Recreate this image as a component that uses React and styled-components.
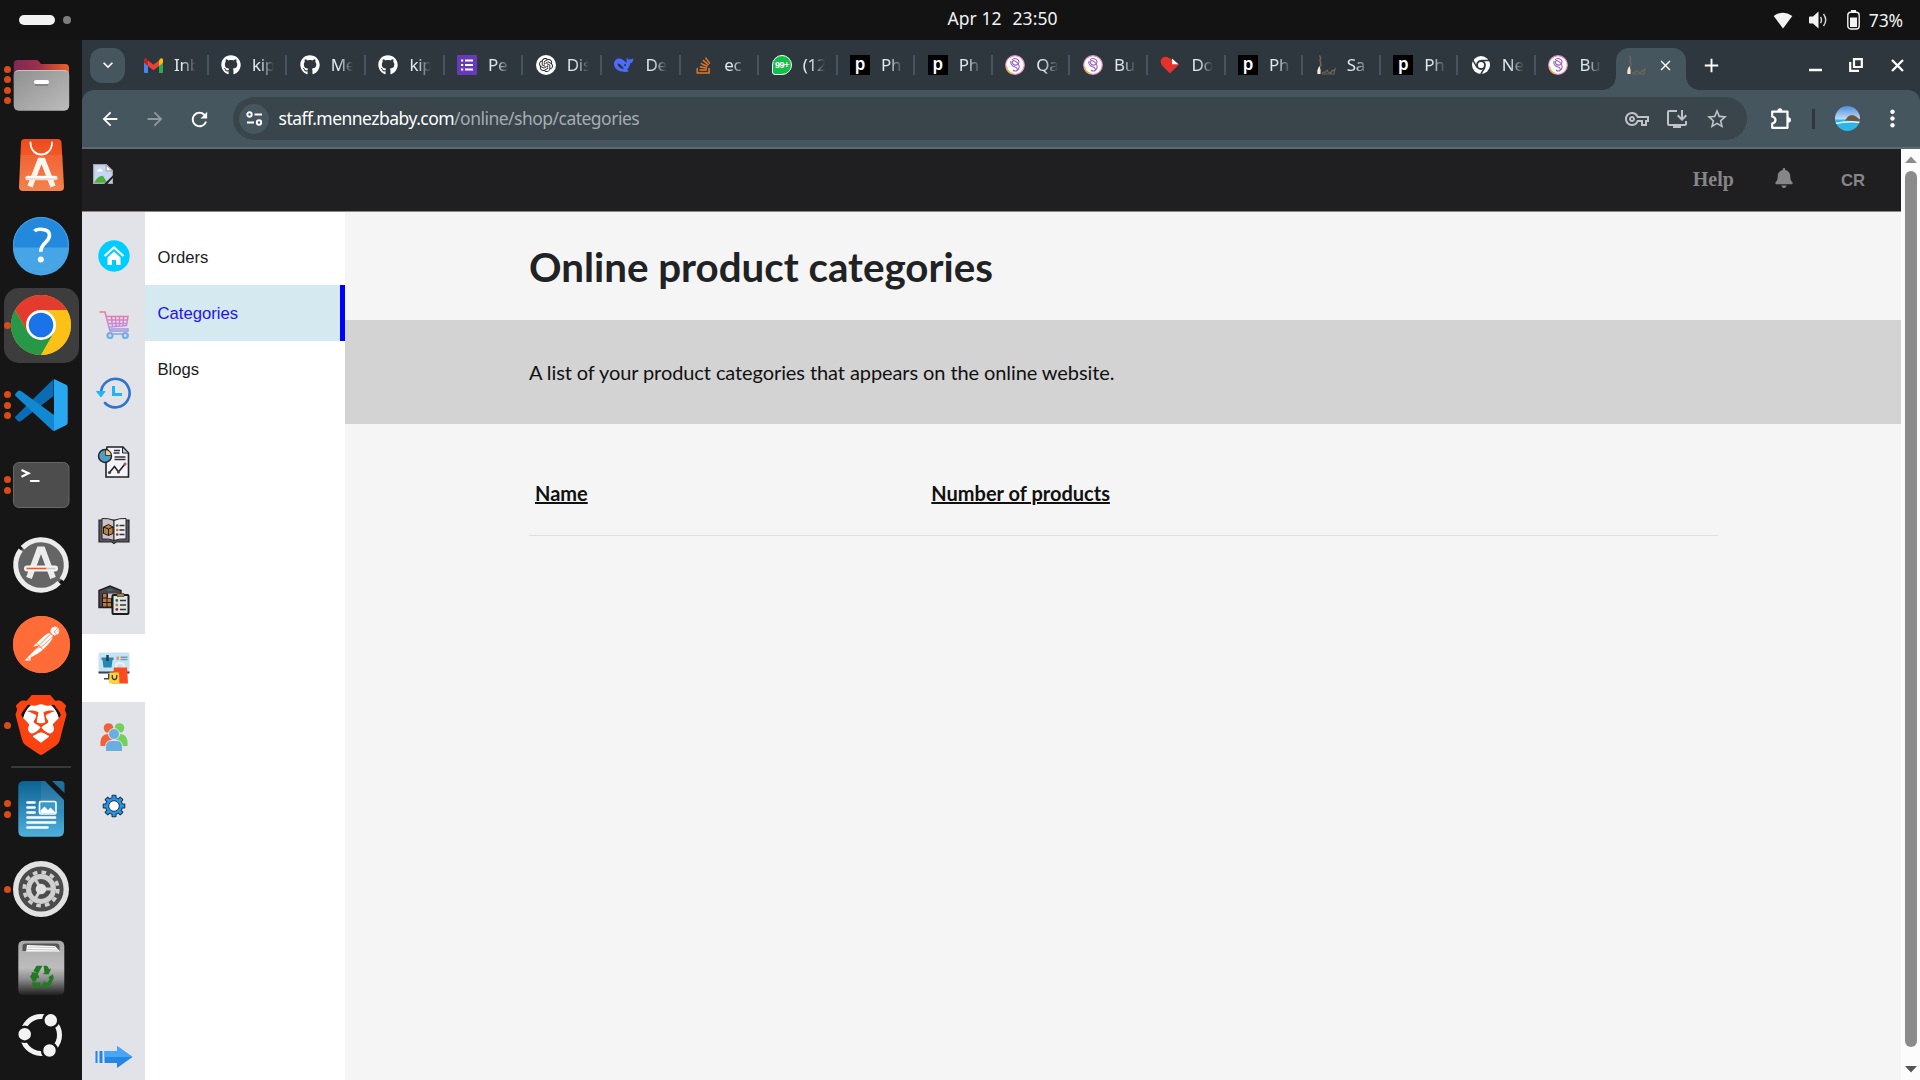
import React from "react";
import styled, { createGlobalStyle, css } from "styled-components";
import { FaGithub, FaStackOverflow, FaBell } from "react-icons/fa";
import { SiBrave, SiPostman, SiOpenai } from "react-icons/si";
import {
  MdArrowBack,
  MdArrowForward,
  MdRefresh,
  MdOutlineVpnKey,
  MdOutlineInstallDesktop,
  MdStarBorder,
  MdMoreVert,
  MdAdd,
  MdClose,
  MdKeyboardArrowDown,
} from "react-icons/md";

const uiFont = `"Noto Sans", "Open Sans", sans-serif`;

const GlobalStyle = createGlobalStyle`
  * { box-sizing: border-box; }
  html, body { margin: 0; padding: 0; background: #131313; overflow: hidden; }
  svg { display: block; flex: none; }
`;

const Desktop = styled.div`
  width: 1920px;
  height: 1080px;
  display: flex;
  flex-direction: column;
  overflow: hidden;
  background: #161616;
`;

/* ---------- system bar ---------- */
const SystemBar = styled.header`
  height: 40px;
  flex: none;
  display: grid;
  grid-template-columns: 1fr auto 1fr;
  align-items: center;
  padding: 0 17px 0 101px;
  background: #131313;
  color: #f2f2f2;
  font-family: ${uiFont};
  font-size: 17.5px;
`;
const Workspaces = styled.div`
  display: flex;
  align-items: center;
  gap: 7.5px;
  margin-left: -82px;
`;
const WorkspacePill = styled.span`
  width: ${(p) => (p.$active ? 36 : 8)}px;
  height: ${(p) => (p.$active ? 10 : 8)}px;
  border-radius: 5px;
  background: ${(p) => (p.$active ? "#f2f2f2" : "#7d7d7d")};
`;
const Clock = styled.div`
  display: flex;
  gap: 11px;
  line-height: 37px;
  height: 40px;
  margin-right: 81px;
  transform: translateX(41px);
  letter-spacing: 0.05px;
`;
const StatusTray = styled.div`
  display: flex;
  align-items: center;
  justify-content: flex-end;
`;
const BatteryText = styled.span`
  margin-left: 9px;
  font-size: 17.5px;
  letter-spacing: -0.1px;
`;
const TrayIcon = styled.svg`
  margin-left: ${(p) => p.$gap || 0}px;
`;

/* ---------- dock ---------- */
const Workspace = styled.div`
  flex: 1;
  display: flex;
  min-height: 0;
`;
const Dock = styled.nav`
  width: 82px;
  flex: none;
  padding-top: 5px;
  display: flex;
  flex-direction: column;
  background: #161616;
`;
const DockItem = styled.div`
  position: relative;
  height: ${(p) => p.$height || 80}px;
  display: grid;
  place-items: center;
  flex: none;
`;
const DockTile = styled.div`
  width: 75px;
  height: ${(p) => (p.$height ? p.$height : 75)}px;
  border-radius: 15px;
  display: flex;
  align-items: center;
  justify-content: center;
  background: ${(p) => (p.$active ? "#3d3d3d" : "transparent")};
`;
const Dots = styled.div`
  position: absolute;
  left: 3.5px;
  top: 0;
  bottom: 0;
  display: flex;
  flex-direction: column;
  justify-content: center;
  gap: 3.4px;
`;
const Dot = styled.i`
  width: 7px;
  height: 7px;
  border-radius: 50%;
  background: #dc4a16;
`;
const DockDivider = styled.hr`
  width: 60px;
  height: 2px;
  margin: 1px auto;
  border: 0;
  background: #3a3a3a;
`;

/* ---------- browser window ---------- */
const Browser = styled.section`
  flex: 1;
  min-width: 0;
  display: flex;
  flex-direction: column;
  background: #2d373d;
  font-family: ${uiFont};
`;
const TabStrip = styled.div`
  height: 50px;
  flex: none;
  display: flex;
  align-items: center;
  padding-left: 8px;
`;
const TabSearch = styled.div`
  width: 35px;
  height: 35px;
  border-radius: 12px;
  background: #45565f;
  color: #fff;
  display: grid;
  place-items: center;
  margin-right: 5.5px;
`;
const Tab = styled.div`
  width: ${(p) => p.$width}px;
  height: 20px;
  padding-left: 12.5px;
  display: flex;
  align-items: center;
  flex: none;
  border-right: 2px solid ${(p) => (p.$last ? "transparent" : "#45565f")};
`;
const TabTitle = styled.span`
  width: 22px;
  margin-left: 11px;
  overflow: hidden;
  white-space: nowrap;
  font-size: 17px;
  line-height: 26px;
  letter-spacing: -0.3px;
  color: #e3e8ea;
  mask-image: linear-gradient(90deg, #000 35%, transparent 100%);
`;
const Favicon = styled.span`
  width: 20px;
  height: 20px;
  flex: none;
  display: grid;
  place-items: center;
  color: #fff;
`;
const LetterMark = styled(Favicon)`
  background: #000;
  font: 600 17px/17px ${uiFont};
  padding-bottom: 3px;
`;
const CountMark = styled(Favicon)`
  border-radius: 50% 50% 50% 3px;
  border: 1.5px solid #fff;
  background: #12c04a;
  font: 700 9px/16px "Liberation Sans", Arial, sans-serif;
  letter-spacing: -0.5px;
`;
const ActiveTab = styled.div`
  width: 70px;
  height: 42.5px;
  margin-left: 2.5px;
  align-self: flex-end;
  position: relative;
  display: flex;
  align-items: center;
  padding: 0 10px 7px;
  gap: 11px;
  border-radius: 13px 13px 0 0;
  background: #45565f;
  color: #fff;
  flex: none;
  &::before,
  &::after {
    content: "";
    position: absolute;
    bottom: 0;
    width: 13px;
    height: 13px;
  }
  &::before {
    left: -13px;
    background: radial-gradient(circle at 0 0, transparent 12.5px, #45565f 13px);
  }
  &::after {
    right: -13px;
    background: radial-gradient(circle at 100% 0, transparent 12.5px, #45565f 13px);
  }
`;
const NewTab = styled.div`
  margin-left: 13.5px;
  color: #fff;
`;
const WindowControls = styled.div`
  margin-left: auto;
  padding-right: 16px;
  display: flex;
  align-items: center;
`;
const Toolbar = styled.div`
  height: 59px;
  flex: none;
  display: flex;
  align-items: center;
  padding-left: 17px;
  border-radius: 12px 12px 0 0;
  background: #45565f;
  border-bottom: 2px solid #5c6b72;
  color: #fff;
`;
const ToolButton = styled.span`
  width: 22px;
  height: 22px;
  display: grid;
  place-items: center;
  margin-right: 22.7px;
  opacity: ${(p) => (p.$dim ? 0.4 : 1)};
`;
const Omnibox = styled.div`
  width: 1514px;
  height: 42.5px;
  margin-right: 22px;
  border-radius: 22px;
  background: #39444b;
  display: flex;
  align-items: center;
  padding: 0 18px 0 6px;
`;
const SiteInfo = styled.span`
  width: 30px;
  height: 30px;
  border-radius: 50%;
  background: #45565f;
  display: grid;
  place-items: center;
`;
const Url = styled.span`
  margin-left: 9.5px;
  margin-top: -1px;
  font-size: 17.5px;
  letter-spacing: -0.52px;
  color: #fff;
  white-space: nowrap;
`;
const UrlPath = styled.span`
  color: #a5adb1;
`;
const OmniActions = styled.div`
  margin-left: auto;
  display: flex;
  gap: 16px;
  color: #c0c3c5;
`;
const ToolDivider = styled.i`
  width: 3px;
  height: 20px;
  margin: 0 20px 0 19px;
  background: #2d373d;
`;
const MenuButton = styled.span`
  margin-left: 18.5px;
`;

/* ---------- page ---------- */
const Viewport = styled.div`
  flex: 1;
  min-height: 0;
  display: flex;
`;
const Page = styled.div`
  flex: 1;
  min-width: 0;
  display: flex;
  flex-direction: column;
  background: #f5f5f5;
`;
const PageHeader = styled.header`
  height: 62.5px;
  flex: none;
  display: flex;
  align-items: center;
  padding: 0 36px 0 11px;
  background: #1f1e20;
  border-bottom: 1px solid #8d878d;
  color: #868686;
`;
const BrokenLogo = styled.svg`
  margin: -12px auto 0 0;
`;
const HelpLink = styled.a`
  font: bold 20px/24px "Liberation Serif", "Times New Roman", serif;
  margin: -2px 40px 0 0;
`;
const BellSlot = styled.span`
  margin-bottom: 4px;
`;
const Initials = styled.span`
  margin-left: 47px;
  padding-top: 2px;
  font: bold 16.67px/20px "Liberation Sans", Arial, sans-serif;
`;
const PageBody = styled.div`
  flex: 1;
  min-height: 0;
  display: flex;
`;
const IconRail = styled.nav`
  width: 63px;
  flex: none;
  padding: 9.5px 0 0;
  display: flex;
  flex-direction: column;
  background: #e2e3e9;
`;
const RailItem = styled.div`
  height: 68.75px;
  flex: none;
  display: grid;
  place-items: center;
  padding: 1px 0 0 1px;
  background: ${(p) => (p.$active ? "#fff" : "transparent")};
  ${(p) =>
    p.$bottom &&
    css`
      height: 46px;
      margin-top: auto;
      padding: 0;
    `}
`;
const SubMenu = styled.nav`
  width: 200px;
  flex: none;
  padding-top: 17.5px;
  background: #fff;
`;
const SubMenuItem = styled.a`
  height: 56.1px;
  display: flex;
  align-items: center;
  padding: 1.5px 0 0 12.5px;
  font: 16.67px/20px "Liberation Sans", Arial, sans-serif;
  color: ${(p) => (p.$active ? "#2211f5" : "#1b1b1b")};
  background: ${(p) => (p.$active ? "#d5e9f0" : "transparent")};
  border-right: 5px solid ${(p) => (p.$active ? "#0000ff" : "transparent")};
`;
const Content = styled.main`
  flex: 1;
  min-width: 0;
  font-family: Lato, sans-serif;
  color: #111;
`;
const Inset = styled.div`
  padding: 0 183px 0 184px;
`;
const Heading = styled.h1`
  margin: 0;
  height: 108.5px;
  display: flex;
  align-items: center;
  padding-top: 1px;
  font-size: 40.3px;
  font-weight: 700;
  color: #212223;
`;
const Band = styled(Inset)`
  height: 103.5px;
  display: flex;
  align-items: center;
  background: #d3d3d3;
  font-size: 20px;
  letter-spacing: -0.09px;
`;
const TableHead = styled.div`
  margin-top: 29px;
  height: 83.5px;
  display: grid;
  grid-template-columns: repeat(3, 1fr);
  align-items: center;
  padding-bottom: 2px;
  border-bottom: 1px solid #dfdfdf;
`;
const Column = styled.span`
  padding: 0 6px;
  font-size: 20px;
  font-weight: 700;
  text-decoration: underline;
  text-decoration-thickness: 1.5px;
`;
const Scrollbar = styled.div`
  width: 19px;
  flex: none;
  display: flex;
  flex-direction: column;
  align-items: center;
  padding: 7px 0 7px 1px;
  background: #fcfcfc;
`;
const Thumb = styled.div`
  width: 12px;
  flex: 1;
  margin: 8px 0 19px;
  border-radius: 6px;
  background: #8b8b8b;
`;

/* ---------- dock drawings ---------- */
const Art = ({ children, size = 64 }) => (
  <svg width={size} height={size} viewBox="0 0 64 64">
    {children}
  </svg>
);

const FilesIcon = () => (
  <Art>
    <defs>
      <linearGradient id="fb" x1="0" x2="1"><stop offset="0" stopColor="#7c2a56" /><stop offset=".45" stopColor="#9c3047" /><stop offset="1" stopColor="#ef6228" /></linearGradient>
      <linearGradient id="ff" x1="0" y1="0" x2="1" y2="1"><stop offset="0" stopColor="#8f8f8f" /><stop offset="1" stopColor="#bcbcbc" /></linearGradient>
    </defs>
    <path d="M4.7 30V11q0-4 4-4H27q2 0 3.500 2l1.500 2H56q4 0 4 4v16z" fill="url(#fb)" />
    <rect x="4.700" y="17" width="55.500" height="40.700" rx="5" fill="url(#ff)" />
    <path d="M6 19.500q1-2 4-2h45q3 0 4 2" stroke="#c4c4c4" fill="none" />
    <rect x="25" y="27" width="15" height="4" rx="2" fill="#fff" />
    <path d="M26 32h13" stroke="#666" />
  </Art>
);
const AppCenterIcon = () => (
  <Art>
    <defs><linearGradient id="ac" x2="0" y2="1"><stop offset="0" stopColor="#ef4a1c" /><stop offset="1" stopColor="#f4793f" /></linearGradient></defs>
    <path d="M15.500 6h33q4 0 4 4L55 54q0 4-4 4H14q-4 0-4-4L12 10q0-4 3.500-4z" fill="url(#ac)" />
    <path d="M11 22h43L55 54q0 4-4 4H14q-4 0-4-4z" fill="#fff" opacity=".07" />
    <path d="M21.500 9.500c0 16 21.500 16 21.500 0" stroke="#fff" strokeWidth="1.800" fill="none" strokeLinecap="round" />
    <path d="M21 53.500L31 27.500h3l10 26" stroke="#fff5ef" strokeWidth="5.500" fill="none" />
    <path d="M18.500 45h28" stroke="#fbd9cc" strokeWidth="4.500" strokeLinecap="round" />
    <path d="M18.500 44h28" stroke="#fff" strokeWidth="2" strokeLinecap="round" />
  </Art>
);
const HelpIcon = () => (
  <Art>
    <circle cx="32" cy="32" r="28" fill="#2389dc" />
    <path d="M4 34.500h56a28 28 0 0 1-56 0z" fill="#46a5e6" />
    <circle cx="32" cy="32" r="27.500" fill="none" stroke="#4ba0df" />
    <path d="M25.500 18.200c2-2.400 15-3.600 15 4 0 7.500-8.700 7-8.700 16.500" fill="none" stroke="#fff" strokeWidth="3.600" />
    <circle cx="31.800" cy="46.500" r="3" fill="#fff" />
  </Art>
);
const ChromeIcon = () => (
  <Art>
    <circle cx="32" cy="32" r="30" fill="#fbc116" />
    <path d="M32 17h26a30 30 0 0 0-52 0l13 22.500z" fill="#e33b2e" />
    <path d="M6 17l13 22.500L32 47l13-7.500L32 62A30 30 0 0 1 6 17z" fill="#279847" />
    <path d="M32 17h26a30 30 0 0 1-26 45l13-22.500z" fill="#fbc116" />
    <circle cx="32" cy="32" r="15" fill="#fff" />
    <circle cx="32" cy="32" r="12.300" fill="#1a73e8" />
  </Art>
);
const CodeIcon = () => (
  <Art>
    <path d="M6.500 43.500L44.500 6v17L12 48q-2 1-3 0l-2.500-2.500q-1-1 0-2z" fill="#0a6cb4" />
    <path d="M6.500 20.500l2.500-2.500q1.500-1 3 0L45 42v16q-1 0-2.500-1.500L6.500 23q-1-1.300 0-2.500z" fill="#1088d2" />
    <path d="M45 6l12 5.800q1.700.8 1.700 2.700v35q0 1.900-1.700 2.700L45 58z" fill="#29a8f2" />
  </Art>
);
const TerminalIcon = () => (
  <Art>
    <rect x="4.500" y="9.500" width="55.500" height="45" rx="5.500" fill="#4d4d4d" stroke="#676767" />
    <path d="M12.500 17l7 3.300-7 3.500" fill="none" stroke="#fff" strokeWidth="2.200" />
    <path d="M21 28h9.500" stroke="#fff" strokeWidth="2" />
  </Art>
);
const UpdaterIcon = () => (
  <Art>
    <circle cx="32" cy="32" r="25" fill="#656565" />
    <circle cx="32" cy="32" r="25.300" fill="none" stroke="#ececec" strokeWidth="5" strokeDasharray="75.500 4" transform="rotate(-137 32 32)" />
    <path d="M20 45L30.500 16.500h3L44 45" stroke="#ececec" strokeWidth="6" fill="none" />
    <path d="M18 35.500h28" stroke="#f3f3f3" strokeWidth="6" strokeLinecap="round" />
    <path d="M17.500 35.500h20" stroke="#e95a2b" strokeWidth="1.600" />
    <path d="M37.500 35.500h9" stroke="#c9c9c9" strokeWidth="1.600" />
  </Art>
);
const WriterIcon = () => (
  <Art>
    <defs><linearGradient id="wr" x2="0" y2="1"><stop offset="0" stopColor="#0c6293" /><stop offset="1" stopColor="#4fb0dc" /></linearGradient></defs>
    <path d="M15 4h21L55 23v31q0 5.700-5.500 5.700H15q-5.700 0-5.700-5.700V9.500Q9.300 4 15 4z" fill="url(#wr)" />
    <path d="M32 4h4L55 23v9H32z" fill="#fff" opacity=".07" />
    <path d="M43 4h9q3.500 0 3.500 3.500V16z" fill="#1f6f9d" />
    <g stroke="#fff" strokeWidth="2.700" strokeLinecap="round">
      <path d="M18.500 25.500h7M18.500 30.500h7M18.500 35.500h7M18.500 40.500h27.500M18.500 45.500h27.500M18.500 50.500h20" />
    </g>
    <rect x="30.500" y="24.500" width="16.500" height="12.500" rx="1.500" fill="#3a9bcb" stroke="#fff" strokeWidth="1.600" />
    <path d="M31.500 36v-2.500l4-4 3.500 3.500 2.500-2.500 4.500 4.500v1z" fill="#fff" />
  </Art>
);
const SettingsIcon = () => (
  <Art>
    <circle cx="32" cy="32" r="25.300" fill="#4c4c4c" stroke="#e2e2e2" strokeWidth="5.400" />
    <circle cx="32" cy="32" r="16.800" fill="none" stroke="#cfcfcf" strokeWidth="3.600" strokeDasharray="4.600 4.196" />
    <circle cx="32" cy="32" r="12.500" fill="none" stroke="#cfcfcf" strokeWidth="5" />
    <path d="M32 32h11M32 32l-6.500-11M32 32l-6.500 11" stroke="#cfcfcf" strokeWidth="3" />
    <circle cx="32" cy="32" r="5.300" fill="#dedede" />
  </Art>
);
const TrashIcon = () => (
  <Art>
    <defs><linearGradient id="tr" x2="0" y2="1"><stop offset="0" stopColor="#a9a9a9" /><stop offset=".5" stopColor="#bdbdbd" /><stop offset=".7" stopColor="#8e8e8e" /><stop offset="1" stopColor="#1e1e1e" /></linearGradient></defs>
    <rect x="9.300" y="3.700" width="46" height="54.500" rx="5" fill="url(#tr)" />
    <path d="M13.500 14V9q0-2.500 3-2.500h31q3 0 3 2.500v5z" fill="#555" />
    <path d="M17 15l1-7 28 1 5 5.500H17z" fill="#fff" />
    <path d="M19 10l27 .5M18 12.500l31 .5" stroke="#aaa" strokeWidth=".7" fill="none" />
    <g fill="#237a23">
      <path d="M27.500 28.700h6l-4.500 8-4.700-2.700z" />
      <path d="M34.500 28.700h3.500l2.300 3.600 2-1-2.800 6.200-6-.5 2-1.200z" />
      <path d="M22.300 35l6.200 1 2 5.800-2-1-2.500 4h-2L21 39.500l2-2.700z" />
      <path d="M23 45.500h8.500v5H26q-1.500 0-2-1z" />
      <path d="M39.500 40l4.300-2.500 1 3.500-3.500 7.500q-.8 2-2.800 2H36v2L32.800 48l3.200-4.500v2h2.500l2-3z" />
    </g>
  </Art>
);
const UbuntuIcon = () => (
  <Art>
    <circle cx="32" cy="32" r="18.500" fill="none" stroke="#f3f3f3" strokeWidth="5" />
    <g fill="#f3f3f3" stroke="#161616" strokeWidth="2.500">
      <circle cx="15.700" cy="31.200" r="7.500" /><circle cx="41.800" cy="17.300" r="7.500" /><circle cx="40.500" cy="47.500" r="7.500" />
    </g>
  </Art>
);
const BraveMark = styled.div`
  display: grid;
  place-items: center;
  width: 60px;
  height: 60px;
  color: #fb4312;
  background: radial-gradient(ellipse 19px 24px at 50% 50%, #fff 96%, transparent);
`;
const PostmanMark = styled.div`
  width: 57px;
  height: 57px;
  margin-top: -2px;
  border-radius: 50%;
  color: #ff6c37;
  background: radial-gradient(circle, #fff 25px, #ff6c37 26px);
`;

const dockApps = [
  { dots: 4, icon: <FilesIcon /> },
  { dots: 0, icon: <AppCenterIcon /> },
  { dots: 0, icon: <HelpIcon /> },
  { dots: 1, icon: <ChromeIcon />, active: true },
  { dots: 3, icon: <CodeIcon /> },
  { dots: 2, icon: <TerminalIcon /> },
  { dots: 0, icon: <UpdaterIcon /> },
  { dots: 0, icon: <PostmanMark><SiPostman size={57} /></PostmanMark> },
  { dots: 1, icon: <BraveMark><SiBrave size={60} /></BraveMark> },
  { divider: true },
  { dots: 2, icon: <WriterIcon /> },
  { dots: 1, icon: <SettingsIcon /> },
  { dots: 0, icon: <TrashIcon /> },
  { dots: 0, icon: <UbuntuIcon />, height: 52 },
];

/* ---------- favicons ---------- */
const Gmail = () => (
  <Favicon>
    <svg width="19" height="15" viewBox="0 0 19 15">
      <path d="M0 2v12q0 1 1 1h3V5z" fill="#4285f4" />
      <path d="M19 2v12q0 1-1 1h-3V5z" fill="#34a853" />
      <path d="M4 2.500l5.500 4.200L15 2.500V8l-5.500 4.200L4 8z" fill="#ea4335" />
      <path d="M0 2q0-2.500 2.700-1.500L4 2.500V8L0 4.800z" fill="#c5221f" />
      <path d="M19 2q0-2.500-2.700-1.500L15 2.500V8l4-3.200z" fill="#fbbc04" />
    </svg>
  </Favicon>
);
const Github = () => <Favicon><FaGithub size={20} /></Favicon>;
const Forms = () => (
  <Favicon>
    <svg width="20" height="20" viewBox="0 0 20 20">
      <rect width="20" height="20" rx="1" fill="#673ab7" />
      <path d="M4 5.500h2.200M4 10h2.200M4 14.500h2.200M8 5.500h8M8 10h8M8 14.500h8" stroke="#fff" strokeWidth="2.200" />
    </svg>
  </Favicon>
);
const OpenAiBadge = styled(Favicon)`
  background: #fff;
  border-radius: 50%;
  color: #222;
`;
const OpenAi = () => <OpenAiBadge><SiOpenai size={14} /></OpenAiBadge>;
const Deepseek = () => (
  <Favicon>
    <svg width="20" height="16" viewBox="0 0 20 16">
      <path d="M0 7c0-4 3-6 6-5.500C9 2 10 4 12.500 6c.5-2-.5-4 .5-5.500 1 2 2 2.500 3.500 1.800L19.500 1.500c-.3 3-1.500 4.500-3.500 5-.3 3-1.500 5-3 6l2 1.500c-3 1.500-5 1-7 .5C3.500 14 0 11 0 7z" fill="#4d6bfe" />
      <path d="M3.500 6.500C6 6 8 9 10 11.500 7 12.500 3.800 10 3.500 6.500z" fill="#2d373d" />
      <circle cx="11" cy="8" r="1" fill="#2d373d" />
    </svg>
  </Favicon>
);
const StackFav = styled(Favicon)`
  color: #e87722;
`;
const Stack = () => <StackFav><FaStackOverflow size={19} /></StackFav>;
const WhatsApp = () => <CountMark>99+</CountMark>;
const Phind = () => <LetterMark>p</LetterMark>;
const Knot = () => (
  <Favicon>
    <svg width="20" height="20" viewBox="0 0 20 20">
      <circle cx="10" cy="10" r="9.300" fill="#fff" stroke="#e08fc0" strokeWidth="1.200" />
      <path d="M1.500 12a8.700 8.700 0 0 0 6 6.700" stroke="#f2b04a" strokeWidth="1.500" fill="none" />
      <path d="M7 5c2-3 7-1 7 2s-4 4-6 2 0-4 2-3 5 4 4 7-4 4-6 2M6 6c-1 3 1 5 4 6s3 3 1 4" fill="none" stroke="#a05fbe" strokeWidth="1.100" />
    </svg>
  </Favicon>
);
const Heart = () => (
  <Favicon>
    <svg width="20" height="18" viewBox="0 0 20 18">
      <path d="M10 17.500L2 9.500C-2 4 4-2 9 2l2 1 8 5.500z" fill="#e5322d" />
      <path d="M12 2.500l6.500 5.700H12z" fill="#fff" />
    </svg>
  </Favicon>
);
const Statue = () => (
  <Favicon>
    <svg width="20" height="20" viewBox="0 0 20 20" fill="none">
      <path d="M3 1c2 0 2 3 1 4l1 5-2 3" stroke="#6e6255" strokeWidth="1.600" />
      <path d="M3.500 11q1.800 4 1 8H1.500q-1-4 2-8z" fill="#f2e8cf" />
      <path d="M6 18q3-2 3 0 2-5 3-1l3 1q1-4 2-2l2-2-1 5H6" stroke="#6f6352" strokeWidth="1.200" />
    </svg>
  </Favicon>
);
const ChromeMono = () => (
  <Favicon>
    <svg width="20" height="20" viewBox="0 0 20 20" fill="none">
      <circle cx="10" cy="10" r="9" fill="#fff" />
      <circle cx="10" cy="10" r="4" fill="#fff" stroke="#2d373d" strokeWidth="1.800" />
      <path d="M10 5.500h8.500M6 12.300L1.800 5M14 12.300L9.800 19" stroke="#2d373d" strokeWidth="1.500" />
    </svg>
  </Favicon>
);

const tabs = [
  [Gmail, "Inb", 78],
  [Github, "kip", 78.7],
  [Github, "Me", 78.7],
  [Github, "kip", 78.7],
  [Forms, "Pe", 78.7],
  [OpenAi, "Dis", 78.7],
  [Deepseek, "De", 78.7],
  [Stack, "ec", 78.7],
  [WhatsApp, "(12", 78.3],
  [Phind, "Ph", 77.6],
  [Phind, "Ph", 77.6],
  [Knot, "Qa", 77.6],
  [Knot, "Bu", 77.6],
  [Heart, "Do", 77.6],
  [Phind, "Ph", 77.6],
  [Statue, "Sa", 77.6],
  [Phind, "Ph", 77.6],
  [ChromeMono, "Ne", 77.6],
  [Knot, "Bu", 77.6],
];

/* ---------- rail drawings ---------- */
const Rail = ({ children }) => (
  <svg width="36" height="36" viewBox="-2 -2 36 36" fill="none">
    {children}
  </svg>
);
const HomeArt = () => (
  <Rail>
    <circle cx="16" cy="16" r="15.700" fill="#00cdff" />
    <path d="M6.500 16L16 7.500l9.500 8.500" stroke="#fff" strokeWidth="2.200" />
    <path d="M9.500 17.500L16 11.500l6.500 6v7.500h-4.500v-5h-4v5H9.500z" fill="#fff" />
  </Rail>
);
const CartArt = () => (
  <Rail>
    <defs><linearGradient id="ct" gradientUnits="userSpaceOnUse" x1="0" y1="2" x2="0" y2="30"><stop offset="0" stopColor="#f0788c" /><stop offset=".5" stopColor="#c987dd" /><stop offset="1" stopColor="#57b6e6" /></linearGradient></defs>
    <g stroke="url(#ct)" strokeWidth="1.500">
      <path d="M1.500 3h5.500l5 19h18v-2H12.500M8.500 7.500H30l-1.500 9-17 1.500M9.500 11H29M10.500 14.500h18M13.500 8l1 10M17.500 8l.5 9.500M21.500 8v9.500M25.500 8l-.5 9.500" />
      <circle cx="12" cy="26.500" r="2.600" fill="#bfe0f2" strokeWidth="2" /><circle cx="27.300" cy="26.500" r="2.600" fill="#bfe0f2" strokeWidth="2" />
      <path d="M15 25h10" />
    </g>
  </Rail>
);
const HistoryArt = () => (
  <Rail>
    <path d="M3 16A14.300 14.300 0 1 1 7 26" stroke="#2b74cf" strokeWidth="2.600" strokeLinecap="round" />
    <path d="M-1.500 14.500h8.500L3 20z" fill="#22b4f7" stroke="#22b4f7" strokeLinejoin="round" />
    <path d="M15.500 9v8.500H24" stroke="#1cb4fa" strokeWidth="3" />
  </Rail>
);
const ReportArt = () => (
  <Rail>
    <path d="M9 1h16l5.500 6v24H8V9z" fill="#f4f3fb" stroke="#222" strokeWidth="1.600" />
    <path d="M24.500 1v6h6z" fill="#a8d4df" stroke="#222" />
    <path d="M16 4.500h6M15.500 7h6M16.500 11h11M16.500 13.500h11" stroke="#333" strokeWidth="1.300" />
    <circle cx="7" cy="10" r="6.500" fill="#4f9cc4" stroke="#222" strokeWidth="1.400" />
    <path d="M7.500 9.500V3.800a6 6 0 0 1 5.800 5.700z" fill="#f3cf81" stroke="#222" strokeWidth=".8" />
    <path d="M11.500 26.500l5-6 4 5.500 6.500-8" stroke="#222" strokeWidth="1.600" />
    <circle cx="11.500" cy="26.500" r="1.600" fill="#244f4c" /><circle cx="20.500" cy="26" r="1.600" fill="#5a4630" /><circle cx="27" cy="18" r="1.500" fill="#c0474a" />
  </Rail>
);
const BookArt = () => (
  <Rail>
    <path d="M1 5h30v22H18l-2 1.500-2-1.500H1z" fill="#5b5560" stroke="#252327" strokeWidth="1.200" />
    <path d="M4 3.500q7-.5 12 2v20q-5-2-12-1.500z" fill="#c9c4cc" stroke="#252327" />
    <path d="M28 3.500q-7-.5-12 2v20q5-2 12-1.500z" fill="#ecebef" stroke="#252327" />
    <path d="M5.500 12l5-2.500 4.500 2.500v6.500l-4.500 2-5-2z" fill="#b6833f" stroke="#20170d" />
    <path d="M5.500 12l5 2 4.500-2M10.500 14v6" stroke="#20170d" />
    <path d="M21.500 10.500h5M21.500 15h5M21.500 19.500h5" stroke="#333" strokeWidth="1.600" />
    <circle cx="19.200" cy="10.500" r="1.300" fill="#2a6d60" /><circle cx="19.200" cy="15" r="1.300" fill="#a77f35" /><circle cx="19.200" cy="19.500" r="1.300" fill="#8f2c35" />
  </Rail>
);
const StockArt = () => (
  <Rail>
    <path d="M1 23.500V6.500l11-4.500 11 4.500v17z" fill="#4b464e" stroke="#1f1d21" strokeWidth="1.400" />
    <path d="M4 9.500h17V23H4z" fill="#1f1815" />
    <path d="M5 10h3.500v3.500H5zM5 14.500h3.500V18H5zM9.500 14.500H13V18H9.500zM5 19h3.500v3.500H5zM9.500 19H13v3.500H9.500z" fill="#b77a3f" />
    <path d="M10 9.500h10v4.500H10z" fill="#c9c7cc" />
    <path d="M9.500 6h5" stroke="#2b7c6b" strokeWidth="1.500" />
    <rect x="14.500" y="11" width="16" height="19" rx="1" fill="#dfe4e4" stroke="#1b1b1c" strokeWidth="2" />
    <path d="M19 9.500h7v3h-7z" fill="#a97f49" stroke="#3b2c1b" strokeWidth=".6" />
    <path d="M22 16.500h6M22 21h6M22 25.500h6" stroke="#333" strokeWidth="1.500" />
    <circle cx="18.800" cy="16.500" r="1.400" fill="#2a6d60" /><circle cx="18.800" cy="21" r="1.400" fill="#a77f35" /><circle cx="18.800" cy="25.500" r="1.400" fill="#8f2c35" />
  </Rail>
);
const ShopArt = () => (
  <Rail>
    <rect x=".5" y=".500" width="31" height="21" rx="1.500" fill="#c5e4f3" />
    <path d="M.5 19.500h31v2H.5zM10 22h7l.5 5.500H6V26h4z" fill="#3f4250" />
    <path d="M3.500 5.500h12v2.500h-1l-1 7.500h-8l-1-7.500h-1z" fill="#2488b0" />
    <path d="M9.500 3v6" stroke="#263b4b" strokeWidth="2.500" />
    <path d="M18.500 4.500h2.500v3.500h-2.500z" fill="#f0907e" />
    <path d="M22.500 5.200h7M22.500 7.500h7" stroke="#7d9aad" strokeWidth="1.500" />
    <path d="M18 17v-3q0-3 4-3t4 3v3" stroke="#f0f0f2" strokeWidth="1.800" />
    <path d="M16 15.500h13l1 16H14z" fill="#fc4a21" />
    <path d="M11.500 20.500h9.500l.5 11H11z" fill="#ffd33a" />
    <path d="M14.300 23v2q0 2.500 2.200 2.500t2.200-2.500v-2" stroke="#40342a" strokeWidth="1.300" />
  </Rail>
);
const PeopleArt = () => (
  <Rail>
    <g fill="#f26237"><circle cx="10.500" cy="7" r="4.800" /><path d="M2.500 25q-1-12 8-12l4 4v8z" /></g>
    <g fill="#6fd158"><circle cx="21.500" cy="7" r="4.800" /><path d="M29.500 25q1-12-8-12l-4 4v8z" /></g>
    <g fill="#6aaee0" stroke="#e2e3e9" strokeWidth="1"><circle cx="16" cy="13" r="5.500" /><path d="M7.500 30.500v-4q0-7 5.500-7h6q5.500 0 5.500 7v4z" /></g>
  </Rail>
);
const GearArt = () => (
  <Rail>
    <g transform="translate(16 16)">
      {[0, 45, 90, 135].map((a) => (
        <rect key={a} x="-2.500" y="-11.300" width="5" height="22.600" rx="1" transform={`rotate(${a})`} fill="#22313d" />
      ))}
      <circle r="9" fill="#22313d" />
      {[0, 45, 90, 135].map((a) => (
        <rect key={a} x="-1.500" y="-10.300" width="3" height="20.600" transform={`rotate(${a})`} fill="#2595ec" />
      ))}
      <circle r="8" fill="#2595ec" />
      <circle r="5.300" fill="#fff" stroke="#22313d" strokeWidth="1" />
    </g>
  </Rail>
);
const ArrowArt = () => (
  <svg width="38" height="24" viewBox="0 0 38 24">
    <path d="M.5 6h2v12h-2zM4.500 6h3v12h-3zM9.500 6H22V1l15.500 11L22 23v-5H9.500z" fill="#2387e6" />
    <path d="M9.500 6H22V1l15.500 11H9.500z" fill="#49a5f5" />
  </svg>
);

const railItems = [HomeArt, CartArt, HistoryArt, ReportArt, BookArt, StockArt, ShopArt, PeopleArt, GearArt];
const subItems = ["Orders", "Categories", "Blogs"];

export default function App() {
  return (
    <Desktop>
      <GlobalStyle />
      <SystemBar>
        <Workspaces>
          <WorkspacePill $active />
          <WorkspacePill />
        </Workspaces>
        <Clock><span>Apr 12</span><span>23:50</span></Clock>
        <StatusTray>
          <TrayIcon width="20" height="17" viewBox="0 0 20 17"><path d="M10 16.500L.7 4Q10-2.500 19.300 4z" fill="#f2f2f2" /></TrayIcon>
          <TrayIcon $gap={16} width="19" height="18" viewBox="0 0 19 18" fill="none">
            <path d="M0 6.500Q0 5.500 1 5.500h3L9.500 .5v17L4 12.500H1Q0 12.500 0 11.500z" fill="#f2f2f2" />
            <path d="M11.500 6q2 3 0 6M14.500 3q4.500 6 0 12" stroke="#d8d8d8" strokeWidth="1.400" />
          </TrayIcon>
          <TrayIcon $gap={19} width="13" height="20" viewBox="0 0 13 20" fill="none">
            <rect x=".8" y="2.300" width="11.400" height="16.700" rx="3" stroke="#f2f2f2" strokeWidth="1.400" />
            <path d="M4 1h5" stroke="#f2f2f2" strokeWidth="2" />
            <rect x="3" y="7.500" width="7" height="9.500" fill="#f2f2f2" />
          </TrayIcon>
          <BatteryText>73%</BatteryText>
        </StatusTray>
      </SystemBar>

      <Workspace>
        <Dock>
          {dockApps.map((app, i) =>
            app.divider ? (
              <DockDivider key={i} />
            ) : (
              <DockItem key={i} $height={app.height}>
                <Dots>{Array.from({ length: app.dots }, (_, d) => <Dot key={d} />)}</Dots>
                <DockTile $active={app.active} $height={app.height}>{app.icon}</DockTile>
              </DockItem>
            )
          )}
        </Dock>

        <Browser>
          <TabStrip>
            <TabSearch><MdKeyboardArrowDown size={20} /></TabSearch>
            {tabs.map(([Icon, title, width], i) => (
              <Tab key={i} $width={width} $last={i === tabs.length - 1}>
                <Icon />
                <TabTitle>{title}</TabTitle>
              </Tab>
            ))}
            <ActiveTab>
              <Statue />
              <MdClose size={17} />
            </ActiveTab>
            <NewTab><MdAdd size={23} /></NewTab>
            <WindowControls>
              <TrayIcon width="13" height="14" viewBox="0 0 13 14"><path d="M0 12h13" stroke="#fff" strokeWidth="2.500" /></TrayIcon>
              <TrayIcon $gap={27} width="14" height="14" viewBox="0 0 14 14" fill="none">
                <path d="M5 1.200h7.800V9H5z" stroke="#fff" strokeWidth="2.200" />
                <path d="M1.200 4v8.800H10" stroke="#fff" strokeWidth="2.200" />
              </TrayIcon>
              <TrayIcon $gap={28} width="13" height="13" viewBox="0 0 13 13"><path d="M1 1l11 11M12 1L1 12" stroke="#fff" strokeWidth="2.300" /></TrayIcon>
            </WindowControls>
          </TabStrip>

          <Toolbar>
            <ToolButton><MdArrowBack size={22} /></ToolButton>
            <ToolButton $dim><MdArrowForward size={22} /></ToolButton>
            <ToolButton><MdRefresh size={23} /></ToolButton>
            <Omnibox>
              <SiteInfo>
                <svg width="17" height="15" viewBox="0 0 17 15" fill="none" stroke="#fff" strokeWidth="1.900">
                  <circle cx="3.500" cy="3.500" r="2.200" /><path d="M8.500 3.500H16M1 11.500h7" /><circle cx="13" cy="11.500" r="2.200" />
                </svg>
              </SiteInfo>
              <Url>staff.mennezbaby.com<UrlPath>/online/shop/categories</UrlPath></Url>
              <OmniActions>
                <MdOutlineVpnKey size={24} />
                <MdOutlineInstallDesktop size={24} />
                <MdStarBorder size={24} />
              </OmniActions>
            </Omnibox>
            <svg width="24" height="24" viewBox="0 0 24 24" fill="none">
              <path d="M3.200 4.700h15.300v16.100H3.200v-4.300q3.300-.8 3.300-3.500t-3.300-3.500z" stroke="#fff" strokeWidth="2.200" strokeLinejoin="round" />
              <path d="M8.300 4.200q0-3 2.600-3t2.600 3zM19 10.200q3 0 3 2.700t-3 2.700z" fill="#fff" />
            </svg>
            <ToolDivider />
            <svg width="25" height="25" viewBox="0 0 25 25">
              <defs>
                <clipPath id="av"><circle cx="12.500" cy="12.500" r="12.500" /></clipPath>
                <linearGradient id="sky" x2="0" y2="1"><stop offset="0" stopColor="#4a8fdd" /><stop offset="1" stopColor="#d5e6f3" /></linearGradient>
              </defs>
              <g clipPath="url(#av)">
                <rect width="25" height="15" fill="url(#sky)" />
                <rect y="13.500" width="25" height="12" fill="#2bb5e8" />
                <path d="M10 14.500l3-4q4-3 8 0l4 3v2z" fill="#6f5540" />
                <path d="M0 17.500q14-3 25-1" stroke="#e6f6fb" strokeWidth="1.600" fill="none" />
              </g>
            </svg>
            <MenuButton><MdMoreVert size={27} /></MenuButton>
          </Toolbar>

          <Viewport>
            <Page>
              <PageHeader>
                <BrokenLogo width="20" height="20" viewBox="0 0 16 16">
                  <path d="M.5 .5h10l5 5v10H.500z" fill="#c6d7f5" stroke="#a9a9a9" />
                  <path d="M10.500 .5v5h5z" fill="#fff" stroke="#a9a9a9" />
                  <path d="M3 6q0-1.500 1.500-1.500Q5 3 6.300 4 8 4.500 7.500 6z" fill="#fff" />
                  <path d="M1 15q3-6 7-5.500l3.500 5.500z" fill="#4caf3c" />
                  <path d="M9 16l7-7v2l-4.500 5z" fill="#1f1e20" />
                </BrokenLogo>
                <HelpLink>Help</HelpLink>
                <BellSlot><FaBell size={20} /></BellSlot>
                <Initials>CR</Initials>
              </PageHeader>
              <PageBody>
                <IconRail>
                  {railItems.map((Item, i) => (
                    <RailItem key={i} $active={i === 6}><Item /></RailItem>
                  ))}
                  <RailItem $bottom><ArrowArt /></RailItem>
                </IconRail>
                <SubMenu>
                  {subItems.map((label) => (
                    <SubMenuItem key={label} $active={label === "Categories"}>{label}</SubMenuItem>
                  ))}
                </SubMenu>
                <Content>
                  <Inset><Heading>Online product categories</Heading></Inset>
                  <Band>A list of your product categories that appears on the online website.</Band>
                  <Inset>
                    <TableHead>
                      <Column>Name</Column>
                      <Column>Number of products</Column>
                    </TableHead>
                  </Inset>
                </Content>
              </PageBody>
            </Page>
            <Scrollbar>
              <svg width="12" height="7" viewBox="0 0 12 7"><path d="M0 7l6-6.500L12 7z" fill="#8b8b8b" /></svg>
              <Thumb />
              <svg width="12" height="7" viewBox="0 0 12 7"><path d="M0 0l6 6.500L12 0z" fill="#555" /></svg>
            </Scrollbar>
          </Viewport>
        </Browser>
      </Workspace>
    </Desktop>
  );
}
